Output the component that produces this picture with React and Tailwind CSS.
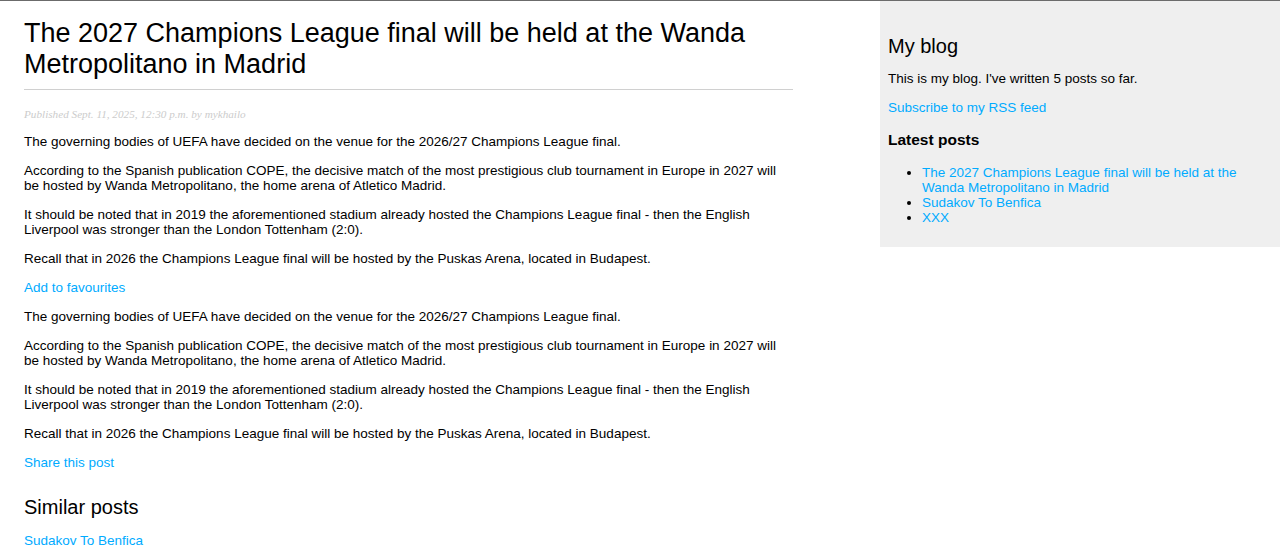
import React from "react";

const paragraphs = [
  "The governing bodies of UEFA have decided on the venue for the 2026/27 Champions League final.",
  "According to the Spanish publication COPE, the decisive match of the most prestigious club tournament in Europe in 2027 will be hosted by Wanda Metropolitano, the home arena of Atletico Madrid.",
  "It should be noted that in 2019 the aforementioned stadium already hosted the Champions League final - then the English Liverpool was stronger than the London Tottenham (2:0).",
  "Recall that in 2026 the Champions League final will be hosted by the Puskas Arena, located in Budapest.",
];

const latestPosts = [
  "The 2027 Champions League final will be held at the Wanda Metropolitano in Madrid",
  "Sudakov To Benfica",
  "XXX",
];

const Body = () => (
  <>
    {paragraphs.map((text, i) => (
      <p key={i} className="mt-[14px]">
        {text}
      </p>
    ))}
  </>
);

const App = () => {
  return (
    <div className="min-h-[559px] bg-white border-t border-[#6b6b6b] font-['Liberation_Sans',Arial,sans-serif] text-[13.5px] leading-[15px] text-black">
      <div className="flex items-start">
        {/* post content */}
        <div className="ml-[24px] w-[769px]">
          <h1 className="mt-[17px] pb-[9px] border-b border-[#d0d0d0] text-[27px] leading-[31px] font-normal">
            The 2027 Champions League final will be held at the Wanda Metropolitano in Madrid
          </h1>
          <p className="mt-[18px] text-[11.2px] leading-[12px] italic text-[#cccccc] font-['Liberation_Serif',Georgia,serif]">
            Published Sept. 11, 2025, 12:30 p.m. by mykhailo
          </p>

          <Body />
          <p className="mt-[14px]">
            <a href="#" className="text-[#00abff]">Add to favourites</a>
          </p>

          <Body />
          <p className="mt-[14px]">
            <a href="#" className="text-[#00abff]">Share this post</a>
          </p>

          <h2 className="mt-[26px] text-[20px] leading-[23px] font-normal">Similar posts</h2>
          <p className="mt-[14px]">
            <a href="#" className="text-[#00abff]">Sudakov To Benfica</a>
          </p>
        </div>

        {/* sidebar */}
        <div className="ml-auto w-[400px] bg-[#efefef] px-[8px] pt-[8px] pb-[8px]">
          <h2 className="mt-[26px] text-[20px] leading-[23px] font-normal">My blog</h2>
          <p className="mt-[13px]">This is my blog. I've written 5 posts so far.</p>
          <p className="mt-[14px]">
            <a href="#" className="text-[#00abff]">Subscribe to my RSS feed</a>
          </p>
          <h3 className="mt-[16px] text-[15.5px] leading-[17px] font-bold">Latest posts</h3>
          <ul className="mt-[17px] mb-[14px] pl-[34px] list-disc">
            {latestPosts.map((title) => (
              <li key={title}>
                <a href="#" className="text-[#00abff]">{title}</a>
              </li>
            ))}
          </ul>
        </div>
      </div>
    </div>
  );
};

export default App;
